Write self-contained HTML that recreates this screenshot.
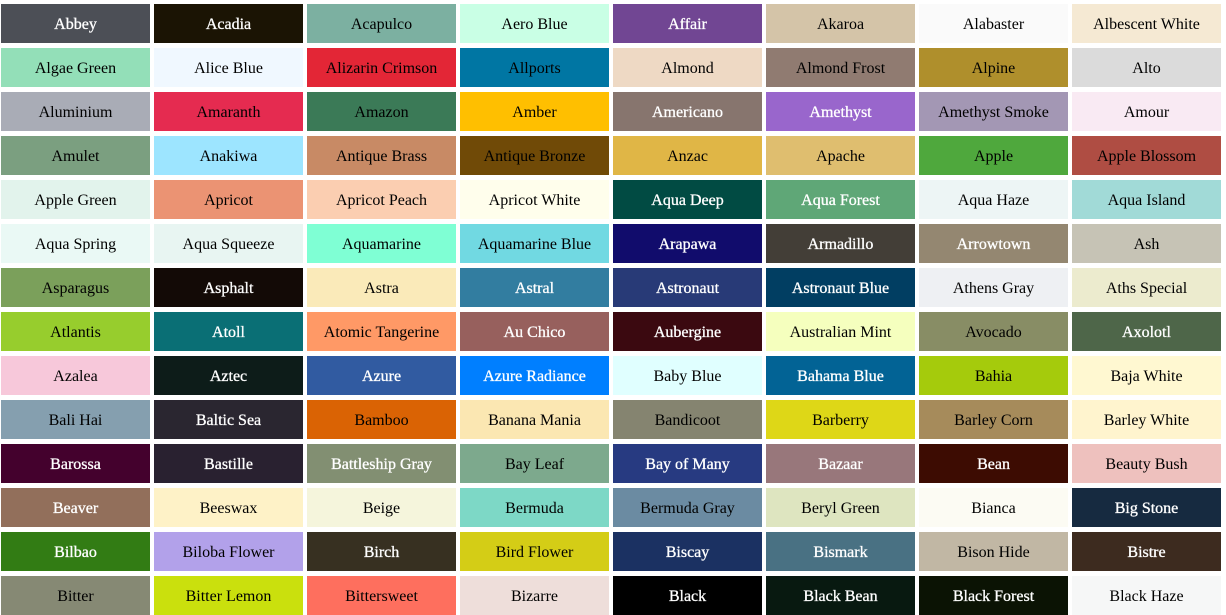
<!DOCTYPE html>
<html><head><meta charset="utf-8"><style>
html,body{margin:0;padding:0;background:#fff;width:1226px;height:580px;overflow:hidden}
.g{position:absolute;left:1px;top:4px;display:grid;grid-template-columns:repeat(8,149px);grid-auto-rows:39px;column-gap:4px;row-gap:5px}
.g div{font-family:"Liberation Serif",serif;font-size:16px;line-height:41px;text-align:center;color:#000;white-space:nowrap;overflow:hidden}
.g div.w{color:#fff;-webkit-text-stroke:0.3px #fff}
</style></head><body><div class="g">
<div class="w" style="background:#4C4F56">Abbey</div><div class="w" style="background:#1B1404">Acadia</div><div style="background:#7CB0A1">Acapulco</div><div style="background:#C9FFE5">Aero Blue</div><div class="w" style="background:#714693">Affair</div><div style="background:#D4C4A8">Akaroa</div><div style="background:#FAFAFA">Alabaster</div><div style="background:#F5E9D3">Albescent White</div>
<div style="background:#93DFB8">Algae Green</div><div style="background:#F0F8FF">Alice Blue</div><div style="background:#E32636">Alizarin Crimson</div><div style="background:#0076A3">Allports</div><div style="background:#EED9C4">Almond</div><div style="background:#907B71">Almond Frost</div><div style="background:#AF8F2C">Alpine</div><div style="background:#DBDBDB">Alto</div>
<div style="background:#A9ACB6">Aluminium</div><div style="background:#E52B50">Amaranth</div><div style="background:#3B7A57">Amazon</div><div style="background:#FFBF00">Amber</div><div class="w" style="background:#87756E">Americano</div><div class="w" style="background:#9966CC">Amethyst</div><div style="background:#A397B4">Amethyst Smoke</div><div style="background:#F9EAF3">Amour</div>
<div style="background:#7B9F80">Amulet</div><div style="background:#9DE5FF">Anakiwa</div><div style="background:#C88A65">Antique Brass</div><div style="background:#704A07">Antique Bronze</div><div style="background:#E0B646">Anzac</div><div style="background:#DFBE6F">Apache</div><div style="background:#4FA83D">Apple</div><div style="background:#AF4D43">Apple Blossom</div>
<div style="background:#E2F3EC">Apple Green</div><div style="background:#EB9373">Apricot</div><div style="background:#FBCEB1">Apricot Peach</div><div style="background:#FFFEEC">Apricot White</div><div class="w" style="background:#014B43">Aqua Deep</div><div class="w" style="background:#5FA777">Aqua Forest</div><div style="background:#EDF5F5">Aqua Haze</div><div style="background:#A1DAD7">Aqua Island</div>
<div style="background:#EAF9F5">Aqua Spring</div><div style="background:#E8F5F2">Aqua Squeeze</div><div style="background:#7FFFD4">Aquamarine</div><div style="background:#71D9E2">Aquamarine Blue</div><div class="w" style="background:#110C6C">Arapawa</div><div class="w" style="background:#433E37">Armadillo</div><div class="w" style="background:#948771">Arrowtown</div><div style="background:#C6C3B5">Ash</div>
<div style="background:#7BA05B">Asparagus</div><div class="w" style="background:#130A06">Asphalt</div><div style="background:#FAEAB9">Astra</div><div class="w" style="background:#327DA0">Astral</div><div class="w" style="background:#283A77">Astronaut</div><div class="w" style="background:#013E62">Astronaut Blue</div><div style="background:#EEF0F3">Athens Gray</div><div style="background:#ECEBCE">Aths Special</div>
<div style="background:#97CD2D">Atlantis</div><div class="w" style="background:#0A6F75">Atoll</div><div style="background:#FF9966">Atomic Tangerine</div><div class="w" style="background:#97605D">Au Chico</div><div class="w" style="background:#3B0910">Aubergine</div><div style="background:#F5FFBE">Australian Mint</div><div style="background:#888D65">Avocado</div><div class="w" style="background:#4E6649">Axolotl</div>
<div style="background:#F7C8DA">Azalea</div><div class="w" style="background:#0D1C19">Aztec</div><div class="w" style="background:#315BA1">Azure</div><div class="w" style="background:#007FFF">Azure Radiance</div><div style="background:#E0FFFF">Baby Blue</div><div class="w" style="background:#026395">Bahama Blue</div><div style="background:#A5CB0C">Bahia</div><div style="background:#FFF8D1">Baja White</div>
<div style="background:#859FAF">Bali Hai</div><div class="w" style="background:#2A2630">Baltic Sea</div><div style="background:#DA6304">Bamboo</div><div style="background:#FBE7B2">Banana Mania</div><div style="background:#858470">Bandicoot</div><div style="background:#DED717">Barberry</div><div style="background:#A68B5B">Barley Corn</div><div style="background:#FFF4CE">Barley White</div>
<div class="w" style="background:#44012D">Barossa</div><div class="w" style="background:#292130">Bastille</div><div class="w" style="background:#828F72">Battleship Gray</div><div style="background:#7DA98D">Bay Leaf</div><div class="w" style="background:#273A81">Bay of Many</div><div class="w" style="background:#98777B">Bazaar</div><div class="w" style="background:#3D0C02">Bean</div><div style="background:#EEC1BE">Beauty Bush</div>
<div class="w" style="background:#926F5B">Beaver</div><div style="background:#FEF2C7">Beeswax</div><div style="background:#F5F5DC">Beige</div><div style="background:#7DD8C6">Bermuda</div><div style="background:#6B8BA2">Bermuda Gray</div><div style="background:#DEE5C0">Beryl Green</div><div style="background:#FCFBF3">Bianca</div><div class="w" style="background:#162A40">Big Stone</div>
<div class="w" style="background:#327C14">Bilbao</div><div style="background:#B2A1EA">Biloba Flower</div><div class="w" style="background:#373021">Birch</div><div style="background:#D4CD16">Bird Flower</div><div class="w" style="background:#1B3162">Biscay</div><div class="w" style="background:#497183">Bismark</div><div style="background:#C1B7A4">Bison Hide</div><div class="w" style="background:#3D2B1F">Bistre</div>
<div style="background:#868974">Bitter</div><div style="background:#CAE00D">Bitter Lemon</div><div style="background:#FE6F5E">Bittersweet</div><div style="background:#EEDEDA">Bizarre</div><div class="w" style="background:#000000">Black</div><div class="w" style="background:#081910">Black Bean</div><div class="w" style="background:#0B1304">Black Forest</div><div style="background:#F6F7F7">Black Haze</div>
</div></body></html>
